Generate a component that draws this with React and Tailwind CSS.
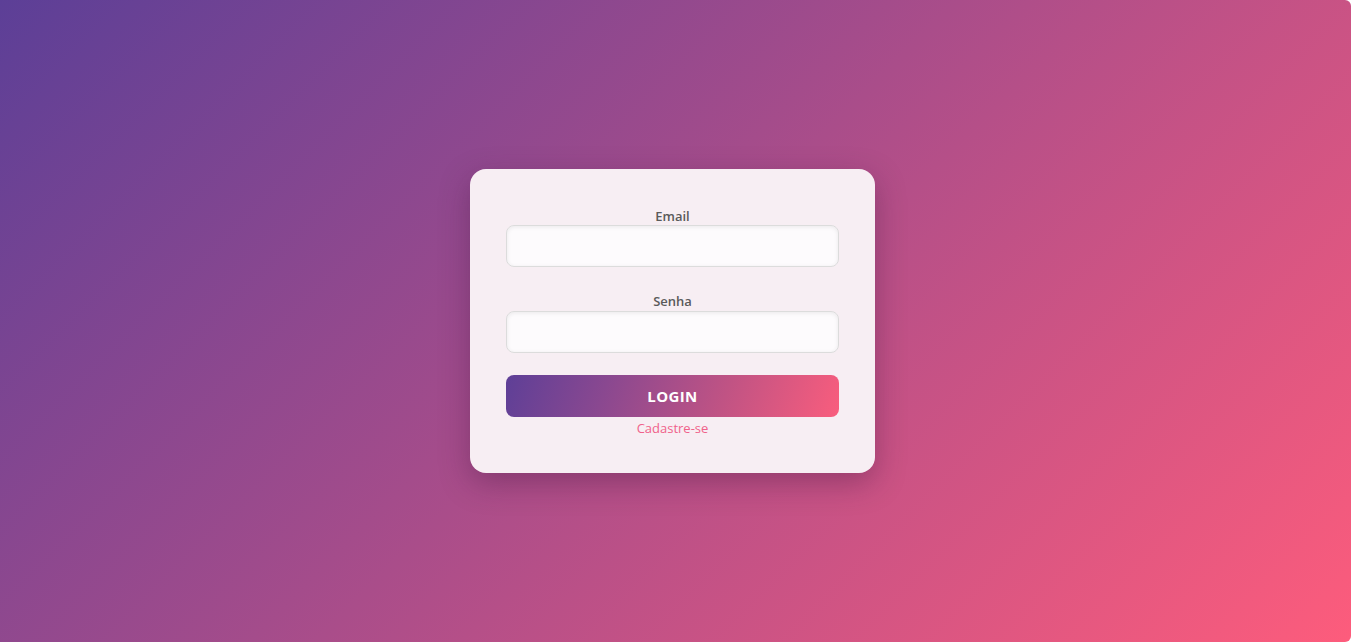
import React, { useState } from 'react';

export default function App() {
  const [email, setEmail] = useState('');
  const [senha, setSenha] = useState('');

  return (
    <div className="bg-white">
      <div
        className="h-[642px] w-[1351px] rounded-r-[6px] bg-[linear-gradient(135deg,#5c3f97_0%,#fd5c7c_100%)] flex items-center justify-center pr-[6px]"
        style={{ fontFamily: '"Open Sans", "Noto Sans", sans-serif' }}
      >
        {/* Login card */}
        <div className="w-[405px] h-[304px] rounded-2xl bg-[#f7eef3] px-[36px] pt-[38px] shadow-[0_10px_30px_rgba(60,20,60,0.35)] flex flex-col">
          <label className="text-[13px] font-semibold text-[#5a5a5a] text-center leading-[18px]">Email</label>
          <input
            type="email"
            value={email}
            onChange={(e) => setEmail(e.target.value)}
            className="h-[42px] w-full rounded-lg border border-[#dcdcdc] bg-[#fdfbfd] shadow-[inset_0_1px_4px_rgba(0,0,0,0.08)] px-3 outline-none"
          />

          <label className="text-[13px] font-semibold text-[#5a5a5a] text-center leading-[18px] mt-[25px] mb-[1px]">Senha</label>
          <input
            type="password"
            value={senha}
            onChange={(e) => setSenha(e.target.value)}
            className="h-[42px] w-full rounded-lg border border-[#dcdcdc] bg-[#fdfbfd] shadow-[inset_0_1px_4px_rgba(0,0,0,0.08)] px-3 outline-none"
          />

          <button className="mt-[22px] h-[42px] w-full rounded-lg bg-[linear-gradient(110deg,#5e3f97_0%,#8a4890_30%,#c05384_65%,#f95d7d_100%)] text-white text-[15px] font-bold tracking-wide">
            LOGIN
          </button>
          <a href="#" className="mt-[2px] text-center text-[13px] text-[#f0628a] leading-[18px]">Cadastre-se</a>
        </div>
      </div>
    </div>
  );
}
